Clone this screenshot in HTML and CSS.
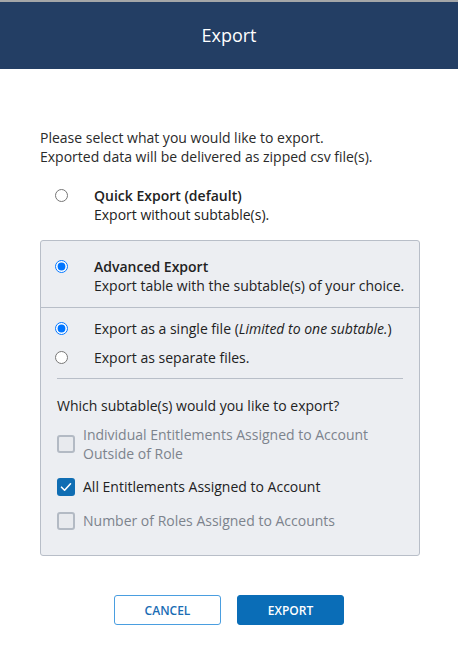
FILE: index.html
```html
<!DOCTYPE html>
<html lang="en">
<head>
  <meta charset="UTF-8">
  <title>Export</title>
  <link rel="stylesheet" href="styles.css">
</head>
<body>

  <div class="modal">
    <div class="modal-header">Export</div>

    <div class="modal-body">
      <p class="intro">
        Please select what you would like to export.<br>
        Exported data will be delivered as zipped csv file(s).
      </p>

      <label class="option">
        <input type="radio" name="mode" value="quick">
        <span class="option-text">
          <strong>Quick Export (default)</strong>
          Export without subtable(s).
        </span>
      </label>

      <div class="panel">
        <label class="option panel-head">
          <input type="radio" name="mode" value="advanced" checked>
          <span class="option-text">
            <strong>Advanced Export</strong>
            Export table with the subtable(s) of your choice.
          </span>
        </label>

        <div class="panel-body">
          <div class="file-modes">
            <label class="option">
              <input type="radio" name="files" value="single" checked>
              <span class="option-text">Export as a single file (<em>Limited to one subtable.</em>)</span>
            </label>
            <label class="option">
              <input type="radio" name="files" value="separate">
              <span class="option-text">Export as separate files.</span>
            </label>
          </div>

          <div class="subtables">
            <p class="question">Which subtable(s) would you like to export?</p>

            <label class="check disabled">
              <span class="box"></span>
              <span>Individual Entitlements Assigned to Account<br>Outside of Role</span>
            </label>
            <label class="check checked">
              <span class="box">
                <svg width="12" height="10" viewBox="0 0 12 10"><path d="M1.5 5.2 4.6 8.2 10.5 1.8" fill="none" stroke="#fff" stroke-width="1.6" stroke-linecap="round" stroke-linejoin="round"/></svg>
              </span>
              <span>All Entitlements Assigned to Account</span>
            </label>
            <label class="check disabled">
              <span class="box"></span>
              <span>Number of Roles Assigned to Accounts</span>
            </label>
          </div>
        </div>
      </div>
    </div>

    <div class="modal-footer">
      <button class="btn btn-outline">Cancel</button>
      <button class="btn btn-primary">Export</button>
    </div>
  </div>

</body>
</html>
```

FILE: styles.css
```css
body {
  margin: 0;
  font-family: "Open Sans", "Noto Sans", sans-serif;
  font-size: 14px;
  line-height: 19px;
  color: #222;
  background: #fff;
}

.modal {
  border-top: 2px solid #a4a6a8;
}

.modal-header {
  height: 67px;
  background: #233e64;
  color: #fff;
  font-size: 18px;
  display: flex;
  align-items: center;
  justify-content: center;
}

.modal-body {
  padding: 59px 38px 0 40px;
}

.intro {
  margin: 0 0 20px;
  color: #2a2a2a;
}

.option {
  display: flex;
  align-items: flex-start;
  cursor: pointer;
}

.option input {
  margin: 3px 26px 0 15px;
  flex-shrink: 0;
}

.option-text strong {
  display: block;
  font-weight: 600;
}

.panel {
  margin-top: 16px;
  background: #eceef2;
  border: 1px solid #b8bec8;
  border-radius: 3px;
}

.panel-head {
  padding: 16px 0 12px;
  border-bottom: 1px solid #b8bec8;
}

.panel-head input {
  margin-left: 14px;
}

.panel-body {
  padding: 0 16px 25px;
}

.file-modes {
  display: flex;
  flex-direction: column;
  gap: 10px;
  padding: 11px 0 11px;
  border-bottom: 1px solid #b8bec8;
}

.file-modes .option input {
  margin-left: -2px;
  margin-right: 26px;
}

.question {
  margin: 17px 0 10px;
}

.check {
  display: flex;
  align-items: center;
  gap: 8px;
  margin-bottom: 14px;
  cursor: pointer;
}

.check.checked {
  margin-bottom: 15px;
}

.check:last-child {
  margin-bottom: 0;
}

.check .box {
  width: 18px;
  height: 18px;
  box-sizing: border-box;
  border-radius: 3px;
  flex-shrink: 0;
  display: flex;
  align-items: center;
  justify-content: center;
}

.check.disabled {
  color: #7c838d;
  cursor: default;
}

.check.disabled .box {
  border: 2px solid #b3bac4;
  background: #e8eaee;
}

.check.checked .box {
  background: #0f6db3;
}

.modal-footer {
  display: flex;
  justify-content: center;
  gap: 16px;
  padding-top: 39px;
}

.btn {
  width: 107px;
  height: 30px;
  border-radius: 3px;
  font-family: "Open Sans", "Noto Sans", sans-serif;
  font-size: 12px;
  font-weight: 600;
  text-transform: uppercase;
  cursor: pointer;
}

.btn-outline {
  background: #fff;
  color: #1a6db4;
  border: 1px solid #4a9ee0;
}

.btn-primary {
  background: #0a6db7;
  color: #fff;
  border: 1px solid #0a6db7;
}
```
